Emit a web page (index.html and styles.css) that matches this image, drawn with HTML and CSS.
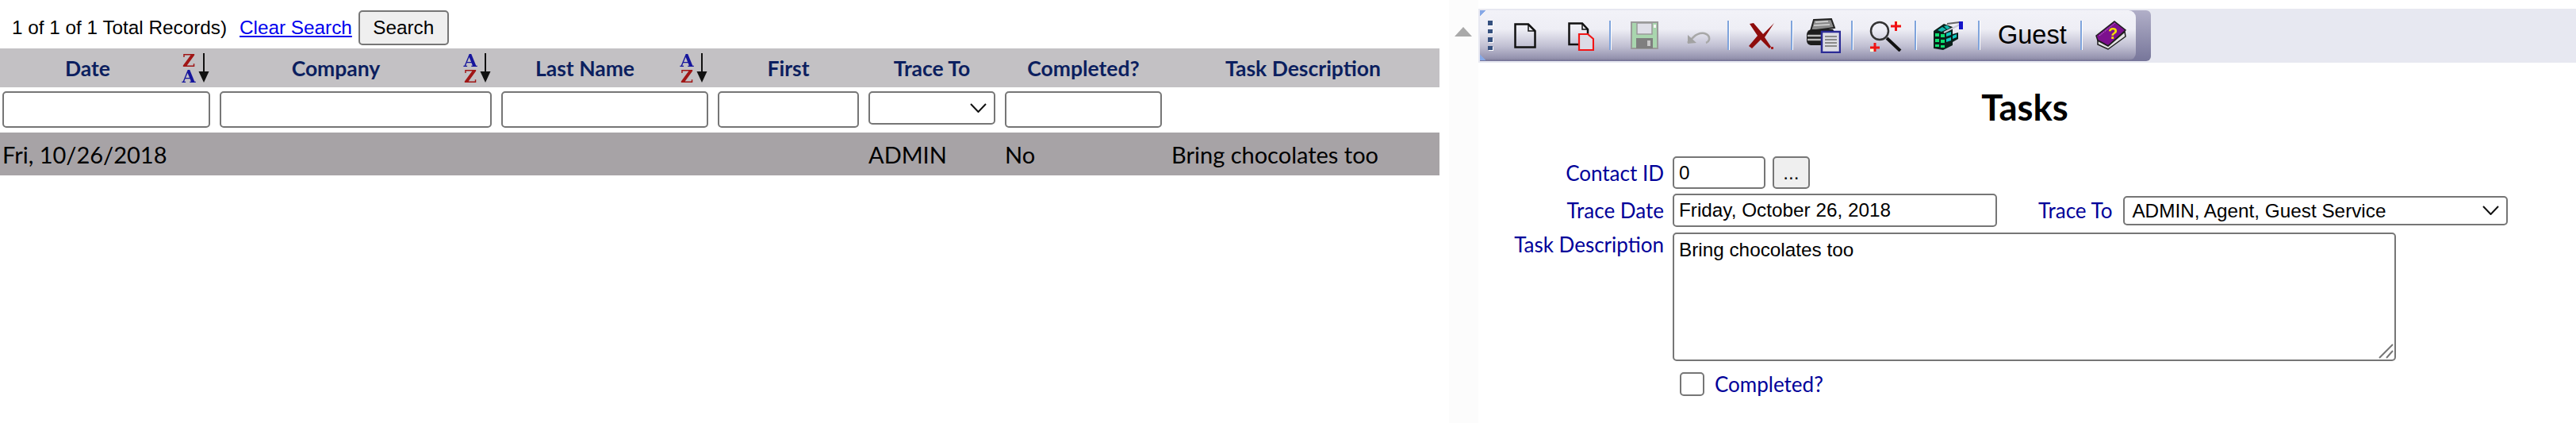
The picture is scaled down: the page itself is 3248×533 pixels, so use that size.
FILE: index.html
```html
<!DOCTYPE html>
<html lang="en">

<head>
    <meta charset="UTF-8">
    <title>Tasks</title>
    <link rel="stylesheet" href="styles.css">
</head>

<body>
    <div class="page">
        <!-- search results list -->
        <div class="list-pane">
            <div class="search-line">
                <span class="record-count">1 of 1 of 1 Total Records)</span>
                <a class="clear-link" href="#">Clear Search</a>
                <button class="search-btn">Search</button>
            </div>

            <table class="grid">
                <colgroup>
                    <col class="col-date">
                    <col class="col-company">
                    <col class="col-last">
                    <col class="col-first">
                    <col class="col-trace">
                    <col class="col-done">
                    <col class="col-desc">
                </colgroup>
                <tr class="head-row">
                    <th>
                        <div class="sort-head">
                            <span class="sort-label">Date</span>
                            <svg class="sort-icon" viewBox="0 0 36 38">
                                <text class="sort-red" x="9" y="17" text-anchor="middle">Z</text>
                                <text class="sort-blue" x="9" y="37" text-anchor="middle">A</text>
                                <path d="M28 0V24" stroke="#111" stroke-width="2" />
                                <path d="M21.500 23H34.500L28 37Z" fill="#111" />
                            </svg>
                        </div>
                    </th>
                    <th>
                        <div class="sort-head">
                            <span class="sort-label">Company</span>
                            <svg class="sort-icon" viewBox="0 0 36 38">
                                <text class="sort-blue" x="9" y="17" text-anchor="middle">A</text>
                                <text class="sort-red" x="9" y="37" text-anchor="middle">Z</text>
                                <path d="M28 0V24" stroke="#111" stroke-width="2" />
                                <path d="M21.500 23H34.500L28 37Z" fill="#111" />
                            </svg>
                        </div>
                    </th>
                    <th>
                        <div class="sort-head">
                            <span class="sort-label">Last Name</span>
                            <svg class="sort-icon" viewBox="0 0 36 38">
                                <text class="sort-blue" x="9" y="17" text-anchor="middle">A</text>
                                <text class="sort-red" x="9" y="37" text-anchor="middle">Z</text>
                                <path d="M28 0V24" stroke="#111" stroke-width="2" />
                                <path d="M21.500 23H34.500L28 37Z" fill="#111" />
                            </svg>
                        </div>
                    </th>
                    <th>First</th>
                    <th>Trace To</th>
                    <th>Completed?</th>
                    <th>Task Description</th>
                </tr>
                <tr class="filter-row">
                    <td class="first-cell"><input class="field" type="text"></td>
                    <td><input class="field" type="text"></td>
                    <td><input class="field" type="text"></td>
                    <td><input class="field" type="text"></td>
                    <td><select class="field filter-select"><option></option></select></td>
                    <td><input class="field" type="text"></td>
                    <td></td>
                </tr>
                <tr class="data-row">
                    <td class="first-cell">Fri, 10/26/2018</td>
                    <td></td>
                    <td></td>
                    <td></td>
                    <td>ADMIN</td>
                    <td>No</td>
                    <td class="desc-cell">Bring chocolates too</td>
                </tr>
            </table>
        </div>

        <!-- collapse strip -->
        <div class="splitter">
            <div class="collapse-arrow"></div>
        </div>

        <!-- detail form -->
        <div class="detail-pane">
            <div class="toolbar-band">
                <div class="toolbar">
                    <div class="toolbar-main">
                        <div class="grip"><i></i><i></i><i></i><i></i></div>

                        <svg class="tool t-new" viewBox="0 0 28 32">
                            <path d="M1.500 1.500H18L26.500 10V30.500H1.500Z" fill="none" stroke="#111" stroke-width="2.500" />
                            <path d="M18 2V10H26" fill="none" stroke="#111" stroke-width="1.500" />
                        </svg>

                        <svg class="tool t-copy" viewBox="0 0 33 36">
                            <path d="M1.500 1.500H18L25 9V28H1.500Z" fill="none" stroke="#111" stroke-width="2.500" />
                            <path d="M18 2V9H25" fill="none" stroke="#111" stroke-width="1.500" />
                            <path d="M14 15H25L32 21V35H14Z" fill="#dcdce6" stroke="#f21616" stroke-width="2.200" />
                        </svg>

                        <span class="sep s-one"></span>

                        <svg class="tool t-save" viewBox="0 0 35 35">
                            <rect x="1" y="1" width="33" height="33" fill="#a9d6ae" stroke="#9a9a9a" stroke-width="2" />
                            <rect x="8" y="2" width="19" height="14" fill="#dfdfe8" stroke="#9a9a9a" stroke-width="1.500" />
                            <rect x="7" y="21" width="21" height="13" fill="#7f7f7f" />
                            <rect x="21" y="24" width="4" height="7" fill="#c8c8c8" />
                            <rect x="29" y="4" width="3" height="4" fill="#f4f4f4" />
                        </svg>

                        <svg class="tool t-undo" viewBox="0 0 30 17">
                            <path d="M1 15L8 8Q14 2 22 3Q29 5 28 11Q27 14 24 15" fill="none" stroke="#a8a8a8" stroke-width="2.500" />
                            <path d="M1 16V5L12 15Z" fill="#a2a2a2" />
                        </svg>

                        <span class="sep s-two"></span>

                        <svg class="tool t-delete" viewBox="0 0 34 34">
                            <path d="M3 2L8 1L20 15L34 1L22 19L30 31L28 33L17 22L6 33L2 30L13 17Z" fill="#8e0c0c" />
                            <rect x="30" y="31" width="3" height="3" fill="#a82020" />
                        </svg>

                        <span class="sep s-three"></span>

                        <svg class="tool t-print" viewBox="0 0 44 44">
                            <path d="M10 2L32 1L36 12L6 16Z" fill="#8b8b8b" stroke="#222" stroke-width="2" />
                            <path d="M12 5L28 4M10 9L30 8" stroke="#dcdcdc" stroke-width="1.500" />
                            <path d="M1 20Q2 14 8 14H34L38 20V34H6Q1 33 1 28Z" fill="#1c1c1c" />
                            <path d="M2 22H20M2 27H20" stroke="#b9b9b9" stroke-width="2.500" />
                            <rect x="20" y="17" width="23" height="26" fill="#dcdce4" stroke="#2b2b96" stroke-width="2.500" />
                            <path d="M24 23H39M24 27H39M24 31H39M24 35H39" stroke="#8a8a8a" stroke-width="2" />
                        </svg>

                        <span class="sep s-four"></span>

                        <svg class="tool t-search" viewBox="0 0 41 40">
                            <circle cx="13" cy="14" r="11" fill="none" stroke="#333" stroke-width="2.500" />
                            <path d="M22 23L39 39" stroke="#111" stroke-width="4" />
                            <rect x="33" y="1" width="6" height="6" fill="#ffffd8" />
                            <rect x="1" y="34" width="6" height="6" fill="#ffffd8" />
                            <path d="M27 8H40M33.500 2V14" stroke="#f01414" stroke-width="3" />
                            <path d="M1 35H13M7 29V40" stroke="#f01414" stroke-width="3" />
                        </svg>

                        <span class="sep s-five"></span>

                        <svg class="tool t-bricks" viewBox="0 0 38 36">
                            <path d="M1 12L14 3L25 7V16L32 14V22L25 26V30L13 36L1 34Z" fill="#0a1f1a" />
                            <path d="M3 15H8V19H3ZM10 16H15V20H10ZM3 22H8V26H3ZM10 23H15V27H10ZM3 29H8V32H3ZM10 30H15V33H10Z" fill="#0ee070" />
                            <path d="M17 15L23 13V17L17 19ZM17 22L23 20V24L17 26ZM25 18L30 16V20L25 22Z" fill="#12c8c0" />
                            <path d="M6 11L12 7L17 10L11 13ZM14 6L18 5L22 8L18 10Z" fill="#14b8b0" />
                            <path d="M14 14L34 4" stroke="#c8c8d4" stroke-width="2" />
                            <path d="M18 3L34 1" stroke="#666" stroke-width="2" />
                            <rect x="33" y="0" width="5" height="10" fill="#1414c8" />
                        </svg>

                        <span class="sep s-six"></span>

                        <span class="user-name">Guest</span>

                        <span class="sep s-seven"></span>

                        <svg class="tool t-help" viewBox="0 0 39 37">
                            <path d="M1 19L24 1L38 12L16 32L3 25Z" fill="#7c108e" stroke="#1e1e1e" stroke-width="1.500" />
                            <path d="M3 25L16 32L37 14L38 20L16 36L3 30Z" fill="#e2e2e2" stroke="#1e1e1e" stroke-width="1.500" />
                            <path d="M5 19L25 3" stroke="#c070d0" stroke-width="1" stroke-dasharray="2 1" />
                            <text class="help-mark" x="22" y="23" text-anchor="middle">?</text>
                        </svg>
                    </div>
                </div>
            </div>

            <h1 class="form-title">Tasks</h1>

            <div class="form-row row-contact">
                <label class="form-label">Contact ID</label>
                <input class="field contact-input" type="text" value="0">
                <button class="pick-btn">...</button>
            </div>

            <div class="form-row row-date">
                <label class="form-label">Trace Date</label>
                <input class="field date-input" type="text" value="Friday, October 26, 2018">
                <label class="trace-label">Trace To</label>
                <select class="field trace-select">
                    <option>ADMIN, Agent, Guest Service</option>
                </select>
            </div>

            <div class="form-row row-desc">
                <label class="form-label desc-label">Task Description</label>
                <textarea class="field desc-input">Bring chocolates too</textarea>
            </div>

            <div class="form-row row-check">
                <input class="done-check" type="checkbox">
                <label class="check-label">Completed?</label>
            </div>
        </div>
    </div>
</body>

</html>
```

FILE: styles.css
```css
body {
    margin: 0;
    padding: 0;
    overflow: hidden;
    background: #fff;
    font-family: "Liberation Sans", Arial, sans-serif;
    font-size: 24.3px;
    color: #000;
}

.page {
    display: flex;
    height: 533px;
}

/* left side, the list */
.list-pane {
    width: 1815px;
    flex: none;
}

.search-line {
    display: flex;
    align-items: center;
    height: 44px;
    padding: 13px 0 4px 15px;
}

.record-count {
    width: 287px;
    white-space: nowrap;
}

.clear-link {
    color: #0000ee;
    text-decoration: underline;
}

.search-btn {
    width: 114px;
    height: 44px;
    margin-left: 8px;
    font: inherit;
    background: #efefef;
    border: 2px solid #767676;
    border-radius: 5px;
    padding: 0;
}

.grid {
    width: 1815px;
    table-layout: fixed;
    border-collapse: collapse;
}

.col-date { width: 271px; }
.col-company { width: 355px; }
.col-last { width: 273px; }
.col-first { width: 190px; }
.col-trace { width: 172px; }
.col-done { width: 210px; }
.col-desc { width: 344px; }

.grid th,
.grid td {
    padding: 0;
}

.head-row {
    height: 49px;
    background: #c3c1c4;
}

.head-row th {
    font-family: Lato, sans-serif;
    font-size: 26.500px;
    font-weight: bold;
    color: #0c1f5f;
    text-align: center;
}

.sort-head {
    display: flex;
    align-items: center;
    padding-right: 6px;
}

.sort-label {
    flex: 1;
    text-align: center;
}

.sort-icon {
    width: 36px;
    height: 38px;
    margin-left: 8px;
    overflow: visible;
    filter: blur(0.4px);
}

.sort-red,
.sort-blue {
    font-family: "DejaVu Serif", serif;
    font-size: 22px;
    font-weight: bold;
}

.sort-red { fill: #a01616; }
.sort-blue { fill: #16169c; }

.filter-row {
    height: 57px;
}

.filter-row td {
    padding: 5px 6px 6px 6px;
    vertical-align: top;
}

.filter-row td.first-cell {
    padding-left: 3px;
}

.field {
    box-sizing: border-box;
    width: 100%;
    height: 46px;
    margin: 0;
    display: block;
    font: inherit;
    color: #000;
    background: #fff;
    border: 2px solid #767676;
    border-radius: 5px;
    padding: 0 6px;
}

select.field {
    appearance: none;
    background: #fff url("data:image/svg+xml,%3Csvg xmlns='http://www.w3.org/2000/svg' width='21' height='12'%3E%3Cpath d='M1 1L10.500 11L20 1' fill='none' stroke='%23111' stroke-width='2'/%3E%3C/svg%3E") no-repeat right 9px center;
}

.filter-select {
    height: 42px;
}

.data-row {
    height: 54px;
    background: #a7a3a6;
}

.data-row td {
    font-family: Lato, sans-serif;
    font-size: 29px;
    color: #000;
    padding-left: 6px;
}

.data-row td.first-cell {
    padding-left: 3px;
}

/* strip between the two sides */
.splitter {
    width: 37px;
    flex: none;
    margin-left: 12px;
    background: #fcfcfc;
}

.collapse-arrow {
    width: 0;
    height: 0;
    margin: 34px 0 0 7px;
    border-left: 11.500px solid transparent;
    border-right: 11.500px solid transparent;
    border-bottom: 12px solid #a9a9a9;
}

/* right side, the form */
.detail-pane {
    flex: 1;
}

.toolbar-band {
    margin-top: 11px;
    padding: 2px;
    background: #e7e8f1;
}

.toolbar {
    width: 846px;
    height: 64px;
    border-radius: 0 6px 6px 0;
    background: linear-gradient(#b1afc8, #77769a);
}

.toolbar-main {
    display: flex;
    align-items: center;
    width: 827px;
    height: 63px;
    border-radius: 0 9px 9px 0;
    background:
        linear-gradient(135deg, #86a8e6 5px, transparent 5px) no-repeat 0 0 / 7px 7px,
        linear-gradient(45deg, #86a8e6 5px, transparent 5px) no-repeat 0 100% / 7px 7px,
        linear-gradient(#f2f2f8 0, #eeeef5 38%, #c0bfd2 72%, #9492ae 96%, #7d7b98 100%);
}

.grip {
    display: flex;
    flex-direction: column;
    gap: 5px;
    margin-left: 10px;
}

.grip i {
    display: block;
    width: 6px;
    height: 5.500px;
    background: #35507f;
    box-shadow: 1px 1px 0 #fff;
    filter: blur(0.4px);
}

.tool {
    flex: none;
    filter: blur(0.5px);
}

.sep {
    flex: none;
    width: 2px;
    height: 37px;
    background: #7fa4dc;
    border-right: 1px solid #fff;
    filter: blur(0.3px);
}

.t-new { width: 28px; height: 32px; margin-left: 27px; }
.t-copy { width: 33px; height: 36px; margin-left: 40px; margin-top: 3px; }
.s-one { margin-left: 19px; }
.t-save { width: 35px; height: 35px; margin-left: 24px; }
.t-undo { width: 30px; height: 17px; margin-left: 36px; margin-top: 5px; }
.s-two { margin-left: 21px; }
.t-delete { width: 34px; height: 34px; margin-left: 22px; }
.s-three { margin-left: 21px; }
.t-print { width: 44px; height: 44px; margin-left: 16px; }
.s-four { margin-left: 13px; }
.t-search { width: 41px; height: 40px; margin-left: 20px; }
.s-five { margin-left: 16px; }
.t-bricks { width: 38px; height: 36px; margin-left: 20px; }
.s-six { margin-left: 19px; }
.s-seven { margin-left: 17px; }
.t-help { width: 39px; height: 37px; margin-left: 16px; }

.user-name {
    width: 87px;
    margin-left: 22px;
    font-size: 32.500px;
}

.help-mark {
    font-family: "Liberation Sans", sans-serif;
    font-size: 20px;
    font-weight: bold;
    fill: #f4e000;
}

.form-title {
    margin: 0;
    height: 89px;
    padding-top: 29px;
    padding-right: 6px;
    font-family: Lato, sans-serif;
    font-size: 45.500px;
    font-weight: bold;
    line-height: 54px;
    text-align: center;
}

.form-row {
    display: flex;
    align-items: center;
}

.form-label {
    width: 234px;
    flex: none;
    margin-right: 11px;
    text-align: right;
}

.form-label,
.trace-label,
.check-label {
    font-family: Lato, sans-serif;
    font-size: 26px;
    color: #000099;
}

.row-contact {
    height: 41px;
    margin-bottom: 6px;
}

.contact-input {
    width: 117px;
    height: 41px;
}

.pick-btn {
    width: 47px;
    height: 41px;
    margin-left: 9px;
    padding: 0;
    font: inherit;
    background: #efefef;
    border: 2px solid #767676;
    border-radius: 5px;
}

.row-date {
    height: 42px;
    margin-bottom: 7px;
}

.date-input {
    width: 409px;
    height: 42px;
}

.trace-label {
    margin-left: 52px;
    margin-right: 14px;
    white-space: nowrap;
}

.trace-select {
    flex: none;
    width: 485px;
    height: 37px;
    padding: 0 9px;
}

.row-desc {
    align-items: flex-start;
    margin-bottom: 14px;
}

.desc-label {
    line-height: 30px;
}

.desc-input {
    width: 912px;
    height: 162px;
    padding: 6px;
    resize: none;
    background: #fff url("data:image/svg+xml,%3Csvg xmlns='http://www.w3.org/2000/svg' width='19' height='19'%3E%3Cpath d='M1 18L18 1M10 18L18 9' fill='none' stroke='%23767676' stroke-width='2'/%3E%3C/svg%3E") no-repeat right 1px bottom 1px;
}

.row-check {
    height: 30px;
    padding-left: 254px;
}

.done-check {
    appearance: none;
    box-sizing: border-box;
    width: 31px;
    height: 30px;
    margin: 0 13px 0 0;
    background: #fff;
    border: 2px solid #767676;
    border-radius: 5px;
}
```
